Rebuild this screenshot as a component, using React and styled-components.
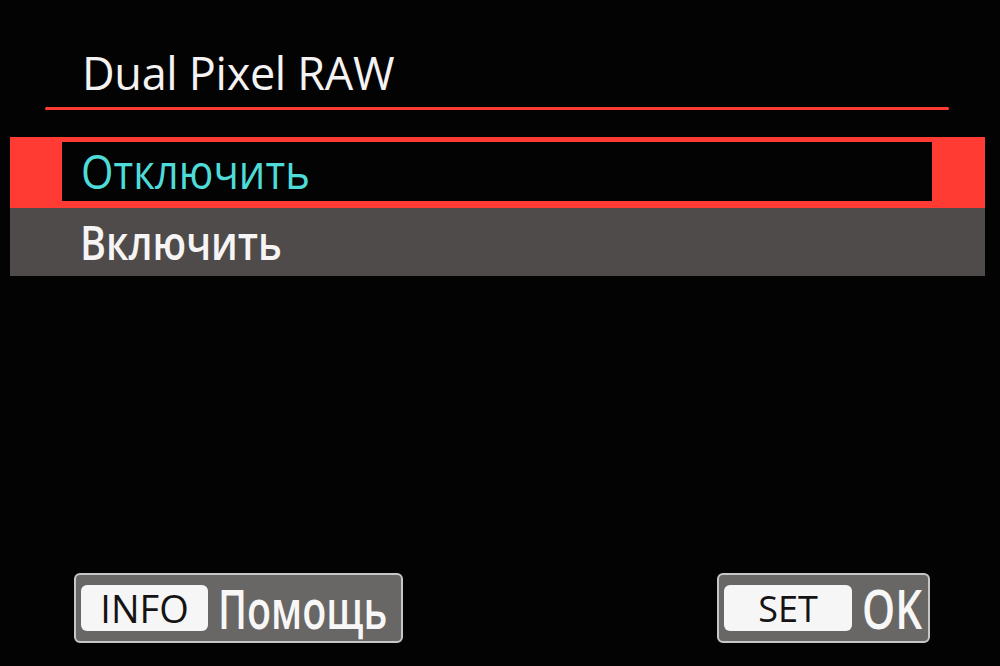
import React from 'react';
import styled, { createGlobalStyle } from 'styled-components';

const Global = createGlobalStyle`
  html, body {
    margin: 0;
    padding: 0;
    background: #030303;
  }
`;

const Screen = styled.div`
  width: 1000px;
  height: 666px;
  background: #030303;
  display: flex;
  flex-direction: column;
  font-family: "Open Sans", "Liberation Sans", sans-serif;
  overflow: hidden;
`;

const Header = styled.div`
  padding: 48px 51px 0 45px;
`;

const Title = styled.div`
  color: #f4f2f2;
  font-size: 45px;
  line-height: 50px;
  font-weight: 500;
  letter-spacing: -0.3px;
  padding-left: 37px;
`;

const Rule = styled.div`
  height: 3px;
  margin-top: 9px;
  background: #ff3b33;
  border-radius: 2px;
`;

const Menu = styled.div`
  margin: 27px 15px 0 10px;
  display: flex;
  flex-direction: column;
`;

const Item = styled.div`
  height: ${({ selected }) => (selected ? '71px' : '68px')};
  box-sizing: border-box;
  background: ${({ selected }) => (selected ? '#ff3b33' : '#4e4b4a')};
  padding: ${({ selected }) => (selected ? '5px 53px 7px 52px' : '0 0 0 70px')};
  display: flex;
`;

const ItemInner = styled.div`
  flex: 1;
  display: flex;
  align-items: center;
  background: ${({ selected }) => (selected ? '#030303' : 'transparent')};
  padding-left: ${({ selected }) => (selected ? '19px' : '0')};
`;

const ItemLabel = styled.span`
  font-size: 47px;
  font-weight: ${({ selected }) => (selected ? 500 : 600)};
  color: ${({ selected }) => (selected ? '#4fdcd8' : '#f6f4f4')};
  line-height: 1;
  display: inline-block;
  transform: scaleX(${({ selected }) => (selected ? 0.89 : 0.84)});
  transform-origin: left center;
`;

const Footer = styled.div`
  margin-top: auto;
  padding: 0 70px 23px 74px;
  display: flex;
  justify-content: space-between;
  align-items: flex-end;
`;

const Hint = styled.div`
  width: ${({ w }) => w}px;
  height: 70px;
  box-sizing: border-box;
  background: #696766;
  border: 2px solid #c9c7c6;
  border-radius: 6px;
  display: flex;
  align-items: center;
  padding-left: 5px;
  gap: 10px;
`;

const Key = styled.div`
  flex-shrink: 0;
  width: ${({ w }) => w}px;
  height: 46px;
  background: #f7f6f6;
  border-radius: 6px;
  display: flex;
  align-items: center;
  justify-content: center;
  color: #151313;
  font-size: ${({ size }) => size}px;
  font-weight: 400;
`;

const HintText = styled.span`
  flex-shrink: 0;
  color: #f8f7f7;
  font-size: 54px;
  font-weight: 600;
  line-height: 1;
  display: inline-block;
  transform: scaleX(${({ sx }) => sx});
  transform-origin: left center;
  margin-right: ${({ trim }) => -trim}px;
`;

export default function App() {
  return (
    <Screen>
      <Global />
      <Header>
        <Title>Dual Pixel RAW</Title>
        <Rule />
      </Header>
      <Menu>
        <Item selected>
          <ItemInner selected>
            <ItemLabel selected>Отключить</ItemLabel>
          </ItemInner>
        </Item>
        <Item>
          <ItemInner>
            <ItemLabel>Включить</ItemLabel>
          </ItemInner>
        </Item>
      </Menu>
      <Footer>
        <Hint w={329}>
          <Key w={127} size={38}>INFO</Key>
          <HintText sx={0.73} trim={70}>Помощь</HintText>
        </Hint>
        <Hint w={213}>
          <Key w={128} size={36}>SET</Key>
          <HintText sx={0.78} trim={20}>OK</HintText>
        </Hint>
      </Footer>
    </Screen>
  );
}
